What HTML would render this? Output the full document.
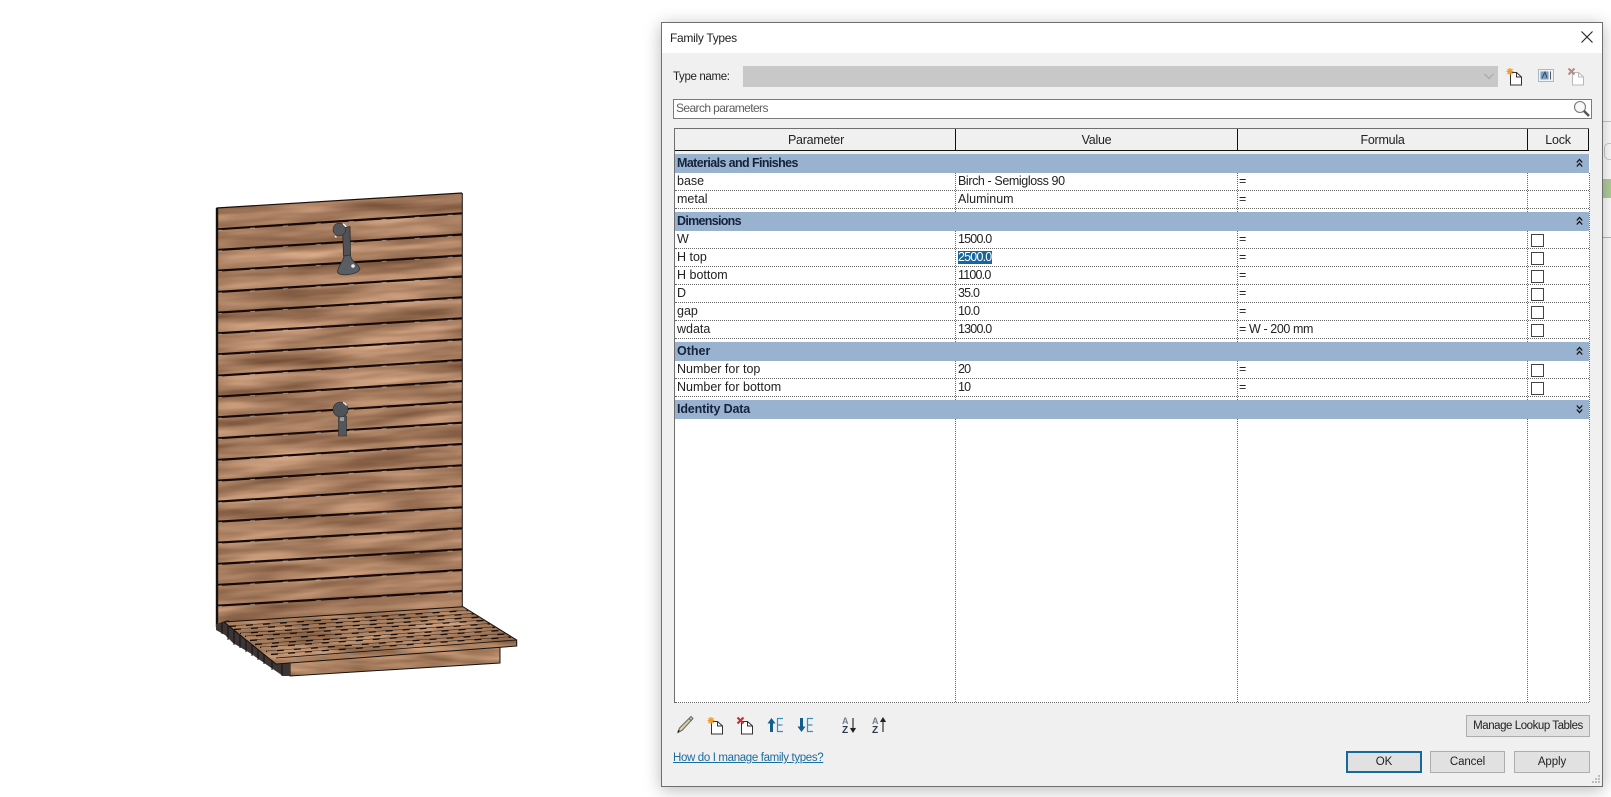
<!DOCTYPE html>
<html><head><meta charset="utf-8"><title>Family Types</title>
<style>
html,body{margin:0;padding:0;background:#fff;width:1611px;height:797px;overflow:hidden}
body{font-family:"Liberation Sans",sans-serif;font-size:12.5px;color:#222;position:relative}
.a{position:absolute;white-space:nowrap}
.t{position:absolute;white-space:nowrap;height:17px;line-height:17px}
.n{letter-spacing:-.8px}
.b{font-weight:bold;color:#14233a;line-height:18px;height:18px;left:677px}
.band{position:absolute;left:675px;width:914px;height:19px;background:#98b2cf}
.dh{position:absolute;left:675px;width:914px;height:0;border-top:1px dotted #666}
.dv{position:absolute;width:0;border-left:1px dotted #666}
.cb{position:absolute;left:1531px;width:11px;height:11px;border:1px solid #444;background:#fff}
.btn{position:absolute;box-sizing:border-box;background:#e1e1e1;border:1px solid #adadad;text-align:center;color:#222;font-size:11.5px;letter-spacing:-.1px}
.hd{position:absolute;top:130px;height:21px;line-height:21px;text-align:center;font-size:12.5px;letter-spacing:-.25px}
.vl{position:absolute;top:129px;height:22px;width:1px;background:#111}
.ico{position:absolute;overflow:visible}
</style></head><body>

<svg class="a" style="left:0;top:0" width="640" height="797" viewBox="0 0 640 797">
<defs>
<filter id="wood" x="0" y="0" width="100%" height="100%" color-interpolation-filters="sRGB">
<feTurbulence type="fractalNoise" baseFrequency="0.009 0.075" numOctaves="3" seed="7"/>
<feColorMatrix type="matrix" values="0.55 0 0 0 0.38  0.5 0 0 0 0.24  0.45 0 0 0 0.15  0 0 0 0 1"/>
</filter>
<filter id="wood2" x="0" y="0" width="100%" height="100%" color-interpolation-filters="sRGB">
<feTurbulence type="fractalNoise" baseFrequency="0.015 0.1" numOctaves="3" seed="3"/>
<feColorMatrix type="matrix" values="0.5 0 0 0 0.42  0.45 0 0 0 0.28  0.4 0 0 0 0.18  0 0 0 0 1"/>
</filter>
<clipPath id="wc"><polygon points="217,208 462,193 462,607 217,626"/></clipPath>
<clipPath id="dc"><polygon points="224,622 463,606.7 516.7,640 516.7,646 276,664"/></clipPath>
<clipPath id="bc"><polygon points="290,662 500,647 500,663 290,676"/></clipPath>
</defs>
<!-- wall -->
<g clip-path="url(#wc)"><rect x="210" y="180" width="260" height="450" filter="url(#wood)" transform="matrix(1 -0.0653 0 1 0 16)"/></g>
<g stroke="#160a08" stroke-width="2.2" fill="none">
<path d="M217 229.3L462 213.3M217 250L462 234.5M217 270.7L462 255.5M217 292L462 276.5M217 312.7L462 297.3M217 333.3L462 318.3M217 354.3L462 339.3M217 375.7L462 360M217 396.7L462 381M217 417.3L462 401.7M217 438.3L462 422.7M217 460L462 444M217 480.7L462 465.3M217 501.7L462 486M217 521.7L462 507.3M217 542.7L462 528.3M217 564L462 549.3M217 585L462 570M217 605.7L462 591"/>
</g>
<g stroke="#fff" stroke-opacity=".45" stroke-width=".8" fill="none" stroke-dasharray="5 28">
<path d="M217 230.3L462 214.3M217 251L462 235.5M217 271.7L462 256.5M217 293L462 277.5M217 313.7L462 298.3M217 334.3L462 319.3M217 355.3L462 340.3M217 376.7L462 361M217 397.7L462 382M217 418.3L462 402.7M217 439.3L462 423.7M217 461L462 445M217 481.7L462 466.3M217 502.7L462 487M217 522.7L462 508.3M217 543.7L462 529.3M217 565L462 550.3M217 586L462 571M217 606.7L462 592"/>
</g>
<path d="M216.5 208L462 193" stroke="#1a0d0a" stroke-width="1.2" fill="none"/>
<path d="M217 208V627" stroke="#15100e" stroke-width="2.4" fill="none"/>
<path d="M462.3 193V607" stroke="#1a0d0a" stroke-width="1" fill="none"/>
<!-- lower box -->
<g clip-path="url(#bc)"><rect x="285" y="645" width="220" height="32" filter="url(#wood2)"/></g>
<polygon points="290,662 500,647 500,663 290,676" fill="none" stroke="#15100e" stroke-width="1"/>
<!-- left staircase -->
<polygon points="216,624 228,620 290,660 290,676 283,676 267,665 250,653 233,643 225,635 216,630" fill="#3c3533"/>
<path d="M222 622V634M228 626V640M234 630V645M240 634V648M246 638V652M252 642V656M258 646V660M264 650V664M272 654V670M282 658V676" stroke="#111" stroke-width="1"/>
<!-- deck -->
<g clip-path="url(#dc)"><rect x="215" y="600" width="305" height="70" filter="url(#wood2)"/></g>
<polygon points="224,622 463,606.7 516.7,640 516.7,646 276,664" fill="none" stroke="#15100e" stroke-width="1"/>
<path d="M276 658L516.7 640" stroke="#15100e" stroke-width=".8"/>
<g stroke="#3a2a20" stroke-width=".6" fill="none">
<path d="M229 626L468 610M234 629L474 613.4M240 633L479 616.7M245 636L484.5 620M250 640L490 623.4M255 644L495 626.8M260 647L500 630M266 651L506 633.5M271 654L511 636.7"/>
</g>
<g stroke="#120c0a" stroke-width="1.2" fill="none" stroke-dasharray="7 10">
<path d="M229 626.5L468 610.5M234 629.5L474 613.9"/>
<path stroke-dashoffset="6" d="M240 633.5L479 617.2M245 636.5L484.5 620.5"/>
<path d="M250 640.5L490 623.9M255 644.5L495 627.3"/>
<path stroke-dashoffset="6" d="M260 647.5L500 630.5M266 651.5L506 634"/>
<path d="M271 654.5L511 637.2"/>
</g>
<!-- upper shower head -->
<path d="M342.500 228L350 226.500L350.500 256H343.500Z" fill="#4f5256" stroke="#222" stroke-width=".7"/>
<circle cx="339.3" cy="229.5" r="6.3" fill="#55575b" stroke="#2b2b2b" stroke-width=".6"/>
<path d="M343 224a6 6 0 0 1 3 3" stroke="#fff" stroke-width="1.4" fill="none"/>
<path d="M335 236l1.4 1.4" stroke="#fff" stroke-width="1.2"/>
<path d="M344 256C343 263 338 265 337.500 272C338.500 277 358 275 360 269C358 263 351 262 350.500 255Z" fill="#5a5d61" stroke="#2a2a2a" stroke-width=".7"/>
<circle cx="353" cy="266" r="1.800" fill="#eee"/>
<!-- lower valve -->
<path d="M338.500 416H346.500V436H338.500Z" fill="#53565a" stroke="#2a2a2a" stroke-width=".6"/>
<path d="M340 417h4v4h-4z" fill="#9a9c9e"/>
<circle cx="340.500" cy="409.500" r="7.500" fill="#4f5256" stroke="#2a2a2a" stroke-width=".6"/>
<path d="M343 402.500a7 7 0 0 1 3.500 3" stroke="#fff" stroke-width="1.200" fill="none"/>
</svg>

<!-- background window sliver at right -->
<div class="a" style="left:1603px;top:121px;width:8px;height:1px;background:#c8c8c8"></div>
<div class="a" style="left:1604px;top:143px;width:7px;height:15px;border:1px solid #ccc;border-right:0;border-radius:5px 0 0 5px"></div>
<div class="a" style="left:1603px;top:179px;width:8px;height:19px;background:#b4cd9c"></div>
<div class="a" style="left:1603px;top:237px;width:8px;height:1px;background:#bbb"></div>

<!-- dialog -->
<div class="a" style="left:661px;top:22px;width:940px;height:763px;background:#f0f0f0;border:1px solid #6e6e6e;box-shadow:0 3px 16px rgba(0,0,0,.28)"></div>
<div class="a" style="left:662px;top:23px;width:940px;height:30px;background:#fff"></div>
<div class="a" style="left:670px;top:30px;font-size:12px;letter-spacing:-.3px;line-height:17px;color:#222">Family Types</div>
<svg class="ico" style="left:1581px;top:31px" width="12" height="12"><path d="M.5 .5L11.500 11.500M11.500 .5L.5 11.500" stroke="#222" stroke-width="1.100"/></svg>

<div class="a" style="left:673px;top:68px;line-height:18px;font-size:11.5px;letter-spacing:-.35px">Type name:</div>
<div class="a" style="left:743px;top:66px;width:755px;height:21px;background:#c8c8c8"></div>
<svg class="ico" style="left:1484px;top:73px" width="10" height="7"><path d="M.5 1L5 5.500L9.500 1" stroke="#a8a8a8" stroke-width="1.200" fill="none"/></svg>

<!-- top icons -->
<svg class="ico" style="left:1505px;top:67px" width="18" height="19"><path d="M5.500 5.500H11.500L16.500 10V18H5.500Z" fill="#fff" stroke="#333" stroke-width="1"/><path d="M11.500 5.500V10H16.500" fill="none" stroke="#333"/><g stroke="#f09a2a" stroke-width="1.300"><path d="M5 1V8M1.500 4.500H8.500M2.500 2L7.500 7M7.500 2L2.500 7"/></g></svg>
<svg class="ico" style="left:1538px;top:69px" width="16" height="14"><rect x=".5" y=".5" width="15" height="12" fill="#eef2f6" stroke="#a9b9c6"/><rect x="2.500" y="2.500" width="8" height="8" fill="#7d9fbc"/><path d="M4 9L7 3L9 9" stroke="#2c4a66" fill="none"/><path d="M12.500 2.500V10.500" stroke="#556"/></svg>
<svg class="ico" style="left:1567px;top:67px" width="18" height="19"><path d="M5.500 5.500H11.500L16.500 10V18H5.500Z" fill="#fff" stroke="#b9b9b9"/><path d="M11.500 5.500V10H16.500" fill="none" stroke="#b9b9b9"/><path d="M1.500 1.500L7.500 7.500M7.500 1.500L1.500 7.500" stroke="#b58a8a" stroke-width="2"/></svg>

<!-- search -->
<div class="a" style="left:673px;top:99px;width:917px;height:18px;background:#fff;border:1px solid #7a7a7a"></div>
<div class="a" style="left:676px;top:100px;line-height:17px;font-size:12px;color:#5e5e5e;letter-spacing:-.6px">Search parameters</div>
<svg class="ico" style="left:1573px;top:100px" width="18" height="18"><circle cx="7" cy="7" r="5.500" fill="#f6f8fa" stroke="#777" stroke-width="1.100"/><path d="M11 11L16 16" stroke="#555" stroke-width="2.400"/></svg>

<!-- table -->
<div class="a" style="left:675px;top:151px;width:915px;height:552px;background:#fff"></div>
<div class="a" style="left:675px;top:151px;width:915px;height:3px;background:#f0f0f0"></div>
<div class="a" style="left:674px;top:128px;width:915px;height:1px;background:#6f6f6f"></div>
<div class="a" style="left:674px;top:150px;width:915px;height:1px;background:#111"></div>
<div class="a" style="left:674px;top:128px;width:1px;height:575px;background:#6f6f6f"></div>
<div class="vl" style="left:955px"></div><div class="vl" style="left:1237px"></div><div class="vl" style="left:1527px"></div><div class="vl" style="left:1588px"></div>
<div class="hd" style="left:677px;width:278px">Parameter</div>
<div class="hd" style="left:956px;width:281px">Value</div>
<div class="hd" style="left:1238px;width:289px">Formula</div>
<div class="hd" style="left:1528px;width:60px">Lock</div>

<!-- grid lines -->
<div class="dv" style="left:955px;top:173px;height:529px"></div>
<div class="dv" style="left:1237px;top:173px;height:529px"></div>
<div class="dv" style="left:1527px;top:173px;height:529px"></div>
<div class="dv" style="left:1589px;top:173px;height:529px"></div>
<div class="dh" style="top:190px"></div><div class="dh" style="top:208px"></div>
<div class="dh" style="top:248px"></div><div class="dh" style="top:266px"></div><div class="dh" style="top:284px"></div><div class="dh" style="top:302px"></div><div class="dh" style="top:320px"></div><div class="dh" style="top:338px"></div>
<div class="dh" style="top:378px"></div><div class="dh" style="top:396px"></div>
<div class="dh" style="top:702px"></div>

<!-- bands -->
<div class="band" style="top:154px"></div>
<div class="band" style="top:212px"></div>
<div class="band" style="top:342px"></div>
<div class="band" style="top:400px"></div>
<div class="t b" style="top:154px;letter-spacing:-.6px">Materials and Finishes</div>
<div class="t b" style="top:212px;letter-spacing:-.7px">Dimensions</div>
<div class="t b" style="top:342px">Other</div>
<div class="t b" style="top:400px;letter-spacing:-.15px">Identity Data</div>
<svg class="ico" style="left:1576px;top:158px" width="7" height="10"><path d="M.8 4.500L3.500 1.500L6.200 4.500M.8 8.500L3.500 5.500L6.200 8.500" stroke="#111" stroke-width="1.300" fill="none"/></svg>
<svg class="ico" style="left:1576px;top:216px" width="7" height="10"><path d="M.8 4.500L3.500 1.500L6.200 4.500M.8 8.500L3.500 5.500L6.200 8.500" stroke="#111" stroke-width="1.300" fill="none"/></svg>
<svg class="ico" style="left:1576px;top:346px" width="7" height="10"><path d="M.8 4.500L3.500 1.500L6.200 4.500M.8 8.500L3.500 5.500L6.200 8.500" stroke="#111" stroke-width="1.300" fill="none"/></svg>
<svg class="ico" style="left:1576px;top:404px" width="7" height="10"><path d="M.8 1.500L3.500 4.500L6.200 1.500M.8 5.500L3.500 8.500L6.200 5.500" stroke="#111" stroke-width="1.300" fill="none"/></svg>

<!-- row text -->
<div class="t" style="left:677px;top:173px">base</div><div class="t" style="left:958px;top:173px;letter-spacing:-.4px">Birch - Semigloss 90</div><div class="t" style="left:1239px;top:173px">=</div>
<div class="t" style="left:677px;top:191px">metal</div><div class="t" style="left:958px;top:191px">Aluminum</div><div class="t" style="left:1239px;top:191px">=</div>
<div class="t" style="left:677px;top:231px">W</div><div class="t n" style="left:958px;top:231px">1500.0</div><div class="t" style="left:1239px;top:231px">=</div>
<div class="t" style="left:677px;top:249px">H top</div>
<div class="a" style="left:958px;top:251px;width:34px;height:13px;background:#17659e"></div>
<div class="t n" style="left:958px;top:249px;color:#fff">2500.0</div><div class="t" style="left:1239px;top:249px">=</div>
<div class="t" style="left:677px;top:267px">H bottom</div><div class="t n" style="left:958px;top:267px">1100.0</div><div class="t" style="left:1239px;top:267px">=</div>
<div class="t" style="left:677px;top:285px">D</div><div class="t n" style="left:958px;top:285px">35.0</div><div class="t" style="left:1239px;top:285px">=</div>
<div class="t" style="left:677px;top:303px">gap</div><div class="t n" style="left:958px;top:303px">10.0</div><div class="t" style="left:1239px;top:303px">=</div>
<div class="t" style="left:677px;top:321px">wdata</div><div class="t n" style="left:958px;top:321px">1300.0</div><div class="t" style="left:1239px;top:321px;letter-spacing:-.4px">= W - 200 mm</div>
<div class="t" style="left:677px;top:361px">Number for top</div><div class="t n" style="left:958px;top:361px">20</div><div class="t" style="left:1239px;top:361px">=</div>
<div class="t" style="left:677px;top:379px">Number for bottom</div><div class="t n" style="left:958px;top:379px">10</div><div class="t" style="left:1239px;top:379px">=</div>

<!-- checkboxes -->
<div class="cb" style="top:234px"></div><div class="cb" style="top:252px"></div><div class="cb" style="top:270px"></div><div class="cb" style="top:288px"></div><div class="cb" style="top:306px"></div><div class="cb" style="top:324px"></div><div class="cb" style="top:364px"></div><div class="cb" style="top:382px"></div>

<!-- bottom toolbar -->
<svg class="ico" style="left:676px;top:715px" width="18" height="20"><path d="M15 1.500L17 3.500L6 15.500L2 17.500L3.500 13Z" fill="#d8cfa8" stroke="#666" stroke-width="1"/><path d="M13 3.500L15.500 6" stroke="#666"/><path d="M2 17.500L3 15" stroke="#222" stroke-width="1.400"/></svg>
<svg class="ico" style="left:706px;top:716px" width="18" height="19"><path d="M5.500 5.500H11.500L16.500 10V18H5.500Z" fill="#fff" stroke="#333"/><path d="M11.500 5.500V10H16.500" fill="none" stroke="#333"/><g stroke="#f09a2a" stroke-width="1.300"><path d="M5 1V8M1.500 4.500H8.500M2.500 2L7.500 7M7.500 2L2.500 7"/></g></svg>
<svg class="ico" style="left:736px;top:716px" width="18" height="19"><path d="M5.500 5.500H11.500L16.500 10V18H5.500Z" fill="#fff" stroke="#333"/><path d="M11.500 5.500V10H16.500" fill="none" stroke="#333"/><path d="M1.500 1.500L7.500 7.500M7.500 1.500L1.500 7.500" stroke="#c8323a" stroke-width="2.200"/></svg>
<svg class="ico" style="left:767px;top:717px" width="17" height="16"><path d="M4.500 1L8.500 6.500H6V15H3V6.500H.5Z" fill="#0f5f8c"/><path d="M16 1.500H10.500V14.500H16M10.500 8H15.500" fill="none" stroke="#3d8fbc" stroke-width="1.200"/></svg>
<svg class="ico" style="left:797px;top:717px" width="17" height="16"><path d="M4.500 15L8.500 9.500H6V1H3V9.500H.5Z" fill="#0f5f8c"/><path d="M16 1.500H10.500V14.500H16M10.500 8H15.500" fill="none" stroke="#3d8fbc" stroke-width="1.200"/></svg>
<svg class="ico" style="left:842px;top:716px" width="15" height="18"><text x="0" y="8" font-family="Liberation Sans" font-size="9" font-weight="bold" fill="#6d7f94">A</text><text x="0" y="17" font-family="Liberation Sans" font-size="10" font-weight="bold" fill="#2d3a4a">Z</text><path d="M11 2V15M8.500 12L11 16L13.500 12" stroke="#222" stroke-width="1.100" fill="#222"/></svg>
<svg class="ico" style="left:872px;top:716px" width="15" height="18"><text x="0" y="8" font-family="Liberation Sans" font-size="9" font-weight="bold" fill="#6d7f94">A</text><text x="0" y="17" font-family="Liberation Sans" font-size="10" font-weight="bold" fill="#2d3a4a">Z</text><path d="M11 16V3M8.500 6L11 2L13.500 6" stroke="#222" stroke-width="1.100" fill="#222"/></svg>

<div class="a" style="left:673px;top:750px;line-height:17px;font-size:11.5px;letter-spacing:-.35px;color:#1c6c9c;text-decoration:underline">How do I manage family types?</div>

<div class="btn" style="left:1466px;top:715px;width:124px;height:22px;line-height:20px;white-space:nowrap;letter-spacing:-.45px">Manage Lookup Tables</div>
<div class="btn" style="left:1346px;top:751px;width:76px;height:22px;line-height:18px;border:2px solid #146a9c">OK</div>
<div class="btn" style="left:1430px;top:751px;width:75px;height:22px;line-height:20px">Cancel</div>
<div class="btn" style="left:1514px;top:751px;width:76px;height:22px;line-height:20px">Apply</div>

<!-- resize grip -->
<svg class="ico" style="left:1592px;top:775px" width="9" height="9"><g fill="#bdbdbd"><rect x="6" y="0" width="2" height="2"/><rect x="3" y="3" width="2" height="2"/><rect x="6" y="3" width="2" height="2"/><rect x="0" y="6" width="2" height="2"/><rect x="3" y="6" width="2" height="2"/><rect x="6" y="6" width="2" height="2"/></g></svg>
</body></html>
